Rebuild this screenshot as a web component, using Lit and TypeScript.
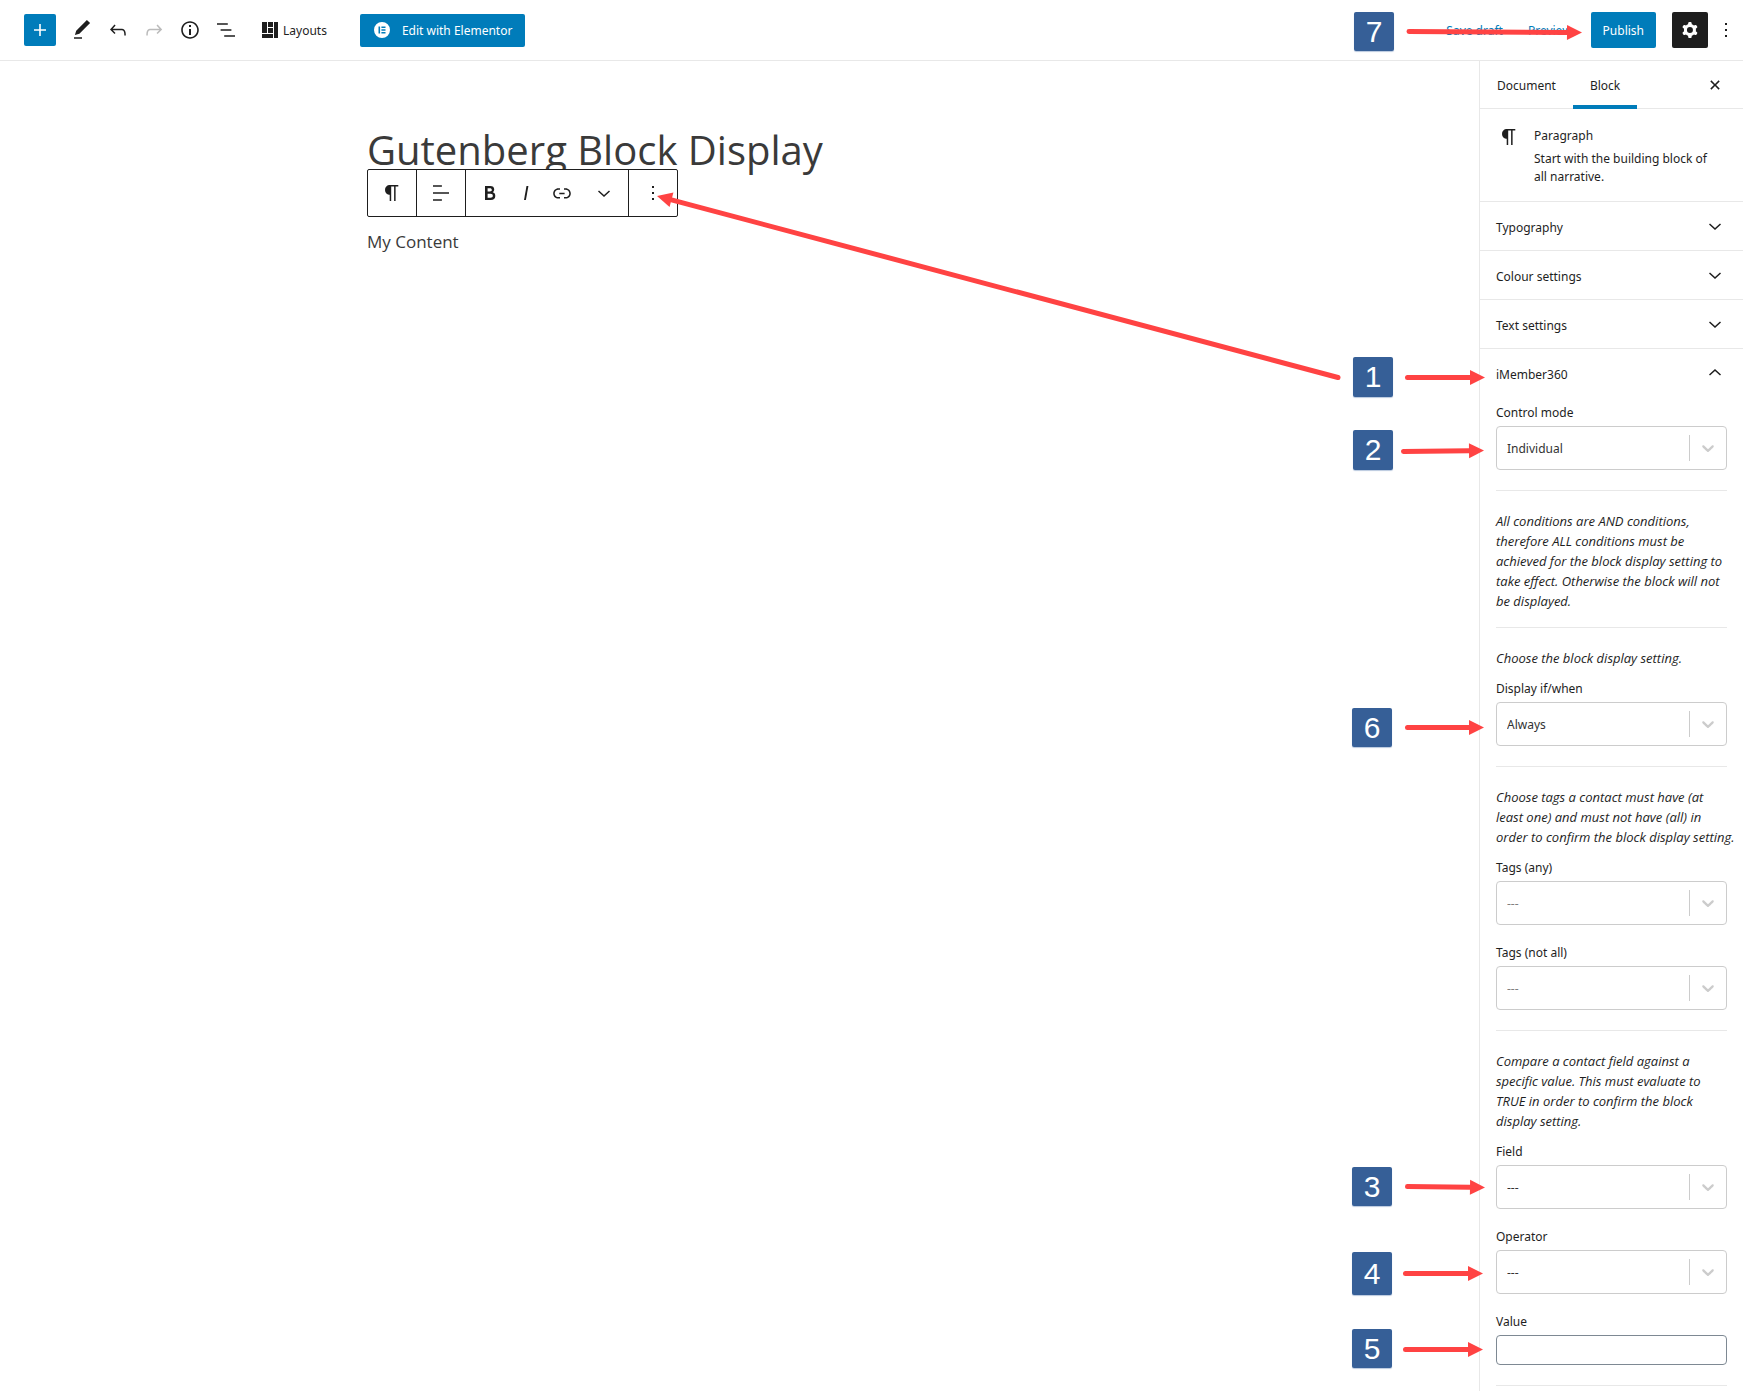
import { LitElement, html, css, svg, nothing } from "lit";
import { customElement, property, state } from "lit/decorators.js";
import { classMap } from "lit/directives/class-map.js";

const ICONS: Record<string, string> = {
  plus: "M18 11.2h-5.2V6h-1.6v5.2H6v1.6h5.2V18h1.6v-5.2H18z",
  edit: "M20.1 5.1L16.9 2 6.2 12.7l-1.3 4.4 4.5-1.3L20.1 5.1zM4 20.8h8v-1.5H4v1.5z",
  undo: "M18.3 11.7c-.6-.6-1.4-.9-2.3-.9H6.7l2.9-3.3-1.1-1-4.5 5L8.5 16l1-1-2.7-2.7H16c.5 0 .9.2 1.3.5 1 1 1 3.4 1 4.5v.3h1.5v-.2c0-1.5 0-4.3-1.5-5.7z",
  redo: "M15.6 6.5l-1.1 1 2.9 3.3H8c-.9 0-1.7.3-2.3.9-1.4 1.5-1.4 4.2-1.4 5.6v.2h1.5v-.3c0-1.1 0-3.5 1-4.5.3-.3.7-.5 1.3-.5h9.2L14.5 15l1.1 1.1 4.6-4.6-4.6-5z",
  info: "M12 3.2c-4.8 0-8.8 3.9-8.8 8.8 0 4.8 3.9 8.8 8.8 8.8 4.8 0 8.8-3.9 8.8-8.8 0-4.8-4-8.8-8.8-8.8zm0 16c-4 0-7.2-3.3-7.2-7.2C4.8 8 8 4.8 12 4.8s7.2 3.3 7.2 7.2c0 4-3.2 7.2-7.2 7.2zM11 17h2v-6h-2v6zm0-8h2V7h-2v2z",
  outline: "M13.8 5.2H3v1.5h10.8V5.2zm-3.6 12v1.5H21v-1.5H10.2zm7.2-6H6.6v1.5h10.8v-1.5z",
  layouts: "M4 4h5v11H4zM4 16h11v4H4zM10 4h5v5h-5zM10 10h5v5h-5zM16 4h4v16h-4z",
  cog: "M10.289 4.836A1 1 0 0111.275 4h1.306a1 1 0 01.987.836l.244 1.466c.787.26 1.503.679 2.108 1.218l1.393-.522a1 1 0 011.216.437l.653 1.13a1 1 0 01-.23 1.273l-1.148.944a6.025 6.025 0 010 2.435l1.149.946a1 1 0 01.23 1.272l-.653 1.13a1 1 0 01-1.216.437l-1.394-.522c-.605.54-1.32.958-2.108 1.218l-.244 1.466a1 1 0 01-.987.836h-1.306a1 1 0 01-.986-.836l-.244-1.466a5.995 5.995 0 01-2.108-1.218l-1.394.522a1 1 0 01-1.217-.436l-.653-1.131a1 1 0 01.23-1.272l1.149-.946a6.026 6.026 0 010-2.435l-1.148-.944a1 1 0 01-.23-1.272l.653-1.131a1 1 0 011.217-.437l1.393.522a5.994 5.994 0 012.108-1.218l.244-1.466zM14.929 12a3 3 0 11-6 0 3 3 0 016 0z",
  more: "M13 19h-2v-2h2v2zm0-6h-2v-2h2v2zm0-6h-2V5h2v2z",
  paragraph: "M18.3 4H9.9v-.1l-.9.2c-2.3.4-4 2.4-4 4.8s1.7 4.4 4 4.8l.7.1V20h1.5V5.5h2.9V20h1.5V5.5h2.7V4z",
  align: "M4 19.8h8.9v-1.5H4v1.5zm8.9-15.6H4v1.5h8.9V4.2zm-8.9 7v1.5h16v-1.5H4z",
  bold: "M14.7 11.3c1-.6 1.5-1.6 1.5-3 0-2.3-1.3-3.4-4-3.4H7v14h5.8c1.4 0 2.5-.3 3.3-1 .8-.7 1.2-1.7 1.2-2.9.1-1.9-.8-3.1-2.6-3.7zm-5.1-4h2.3c.6 0 1.1.1 1.4.4.3.3.5.7.5 1.2s-.2 1-.5 1.2c-.3.3-.8.4-1.4.4H9.6V7.3zm4.6 9c-.4.3-1 .4-1.7.4H9.6v-3.9h2.9c.7 0 1.3.2 1.7.5.4.3.6.8.6 1.5s-.2 1.2-.6 1.5z",
  italic: "M12.5 5L10 19h1.9l2.5-14z",
  link: "M15.6 7.2H14v1.5h1.6c2 0 3.7 1.7 3.7 3.7s-1.7 3.7-3.7 3.7H14v1.5h1.6c2.8 0 5.2-2.3 5.2-5.2 0-2.9-2.3-5.2-5.2-5.2zM4.7 12.4c0-2 1.7-3.7 3.7-3.7H10V7.2H8.4c-2.9 0-5.2 2.3-5.2 5.2 0 2.9 2.3 5.2 5.2 5.2H10v-1.5H8.4c-2 0-3.7-1.7-3.7-3.7zm4.6.9h5.3v-1.5H9.3v1.5z",
  down: "M17 9.4L12 14 7 9.4l-1 1.1 6 5.5 6-5.5z",
  up: "M12 8l-6 5.5 1 1.1 5-4.6 5 4.6 1-1.1z",
  close: "M8.4 7.3l3.6 3.6 3.6-3.6 1.1 1.1-3.6 3.6 3.6 3.6-1.1 1.1-3.6-3.6-3.6 3.6-1.1-1.1 3.6-3.6-3.6-3.6z",
  elementor: "M12 4a8 8 0 100 16 8 8 0 000-16zM8.5 8.5h1.6v7H8.5zM11.4 8.5h4.1v1.4h-4.1zM11.4 11.3h4.1v1.4h-4.1zM11.4 14.1h4.1v1.4h-4.1z",
};

const icon = (name: string) => html`
  <svg class="icon" viewBox="0 0 24 24" width="24" height="24" fill-rule="evenodd" aria-hidden="true">
    <path d=${ICONS[name]}></path>
  </svg>`;

const base = css`
  :host {
    box-sizing: border-box;
    font-family: "Noto Sans", "Open Sans", sans-serif;
    font-size: 12px;
    line-height: 18px;
    color: #1e1e1e;
  }
  *, *::before, *::after { box-sizing: border-box; }
  button {
    display: flex;
    align-items: center;
    justify-content: center;
    margin: 0;
    padding: 0;
    border: 0;
    background: none;
    color: inherit;
    font: inherit;
    cursor: pointer;
  }
  .caption { padding-top: 2px; }
  .icon { display: block; flex: none; fill: currentColor; }
`;

@customElement("editor-header")
export class EditorHeader extends LitElement {
  static styles = [base, css`
    :host {
      display: flex;
      align-items: center;
      justify-content: space-between;
      height: 61px;
      padding: 0 5px 0 24px;
      border-bottom: 1px solid #e8e8e8;
      background: #fff;
    }
    .group { display: flex; align-items: center; }
    .add { width: 32px; height: 32px; margin-right: 8px; border-radius: 2px; background: #007cba; color: #fff; }
    .tool { width: 36px; height: 36px; }
    .tool:disabled { color: #bbb; }
    .layouts { margin-left: 14px; gap: 1px; }
    .elementor { height: 33px; margin-left: 33px; padding: 0 13px 0 10px; gap: 8px; border-radius: 2px; background: #007cba; color: #fff; }
    .actions { gap: 16px; }
    .link { padding: 0 3px 0 6px; color: #007cba; }
    .publish { height: 36px; padding: 0 12px; border-radius: 2px; background: #007cba; color: #fff; }
    .settings { width: 36px; height: 36px; border-radius: 2px; background: #1e1e1e; color: #fff; }
    .more { width: 24px; height: 36px; margin-left: -10px; }
  `];

  render() {
    return html`
      <div class="group">
        <button class="add" aria-label="Add block">${icon("plus")}</button>
        <button class="tool" aria-label="Tools">${icon("edit")}</button>
        <button class="tool" aria-label="Undo">${icon("undo")}</button>
        <button class="tool" aria-label="Redo" disabled>${icon("redo")}</button>
        <button class="tool" aria-label="Content structure">${icon("info")}</button>
        <button class="tool" aria-label="Block navigation">${icon("outline")}</button>
        <button class="layouts">${icon("layouts")}<span class="caption">Layouts</span></button>
        <button class="elementor">${icon("elementor")}<span class="caption">Edit with Elementor</span></button>
      </div>
      <div class="group actions">
        <button class="link"><span class="caption">Save draft</span></button>
        <button class="link"><span class="caption">Preview</span></button>
        <button class="publish"><span class="caption">Publish</span></button>
        <button class="settings" aria-label="Settings">${icon("cog")}</button>
        <button class="more" aria-label="Options">${icon("more")}</button>
      </div>`;
  }
}

@customElement("editor-canvas")
export class EditorCanvas extends LitElement {
  static styles = [base, css`
    :host { display: block; padding: 61px 16px; font-family: "Open Sans", "Noto Sans", sans-serif; color: #3a3a3a; }
    .column { width: 100%; max-width: 745px; margin: 0 auto; }
    .title { margin: 0; font-size: 40px; line-height: 56px; font-weight: 400; }
    .toolbar {
      position: relative;
      display: flex;
      width: max-content;
      height: 48px;
      margin-top: -9px;
      border: 1px solid #1e1e1e;
      border-radius: 2px;
      background: #fff;
      color: #1e1e1e;
    }
    .set { display: flex; align-items: center; padding: 0 6px; }
    .set + .set { border-left: 1px solid #1e1e1e; }
    .set button { width: 36px; height: 46px; }
    .set.formats { padding-right: 0; }
    .set .wide { width: 48px; }
    .text { margin: 13px 0 0; font-size: 17px; line-height: 24px; }
  `];

  render() {
    return html`
      <div class="column">
        <h1 class="title">Gutenberg Block Display</h1>
        <div class="toolbar" role="toolbar" aria-label="Block tools">
          <div class="set"><button aria-label="Change block type">${icon("paragraph")}</button></div>
          <div class="set"><button aria-label="Align">${icon("align")}</button></div>
          <div class="set formats">
            <button aria-label="Bold">${icon("bold")}</button>
            <button aria-label="Italic">${icon("italic")}</button>
            <button aria-label="Link">${icon("link")}</button>
            <button class="wide" aria-label="More rich text controls">${icon("down")}</button>
          </div>
          <div class="set"><button aria-label="More options">${icon("more")}</button></div>
        </div>
        <p class="text">My Content</p>
      </div>`;
  }
}

@customElement("select-field")
export class SelectField extends LitElement {
  @property() label = "";
  @property() value = "";
  @property({ type: Boolean }) placeholder = false;

  static styles = [base, css`
    :host { display: block; }
    .label { display: block; margin-bottom: 3px; line-height: 20px; }
    .box {
      display: grid;
      grid-template-columns: 1fr 37px;
      align-items: center;
      height: 44px;
      border: 1px solid #ccc;
      border-radius: 4px;
      background: #fff;
    }
    .select {
      grid-area: 1 / 1 / 2 / 3;
      width: 100%;
      height: 42px;
      margin: 0;
      padding: 2px 46px 0 10px;
      border: 0;
      appearance: none;
      background: none;
      color: #333;
      font: inherit;
    }
    .muted { color: #808080; }
    .arrow {
      grid-area: 1 / 2;
      display: flex;
      align-items: center;
      justify-content: center;
      height: 26px;
      border-left: 1px solid #ccc;
      color: #ccc;
      pointer-events: none;
    }
  `];

  render() {
    return html`
      <label class="label" for="control">${this.label}</label>
      <div class="box">
        <select id="control" class=${classMap({ select: true, muted: this.placeholder })}>
          <option>${this.value}</option>
        </select>
        <span class="arrow">
          <svg class="icon" viewBox="0 0 20 20" width="20" height="20" aria-hidden="true">
            <path d="M4.516 7.548c0.436-0.446 1.043-0.481 1.576 0l3.908 3.747 3.908-3.747c0.533-0.481 1.141-0.446 1.574 0 0.436 0.445 0.408 1.197 0 1.615-0.406 0.418-4.695 4.502-4.695 4.502-0.217 0.223-0.502 0.335-0.787 0.335s-0.57-0.112-0.789-0.335c0 0-4.287-4.084-4.695-4.502s-0.436-1.17 0-1.615z"></path>
          </svg>
        </span>
      </div>`;
  }
}

@customElement("editor-sidebar")
export class EditorSidebar extends LitElement {
  @state() private open = true;

  static styles = [base, css`
    :host { display: block; border-left: 1px solid #e8e8e8; background: #fff; }
    .tabs { display: flex; height: 48px; border-bottom: 1px solid #e8e8e8; }
    .tab { height: 48px; padding: 0 17px; }
    .active { border-bottom: 4px solid #007cba; padding-top: 4px; }
    .close { width: 24px; margin: 0 16px 0 auto; }
    .card { display: flex; gap: 13px; padding: 16px 16px 15px 17px; }
    .name { margin: 0; padding-top: 2px; font-size: 12px; font-weight: 400; line-height: 18px; }
    .about { margin: 5px 0 0; }
    .panel { border-top: 1px solid #e8e8e8; }
    .heading { margin: 0; font-size: 12px; font-weight: 400; }
    .toggle { width: 100%; height: 48px; padding: 0 16px; justify-content: space-between; }
    .toggle .caption { padding-top: 4px; }
    .body { padding: 6px 16px 4px; }
    .rule { height: 1px; margin: 20px 0; border: 0; background: #e8e8e8; }
    .help { margin: 0 0 11px; font-family: "Open Sans", "Noto Sans", sans-serif; font-size: 13px; font-style: italic; line-height: 20px; white-space: nowrap; }
    .help.last { margin-bottom: 16px; }
    .last + .rule { margin-top: 16px; }
    .field + .field { margin-top: 18px; }
    .label { display: block; margin-bottom: 3px; line-height: 20px; }
    .input { display: block; width: 100%; height: 30px; padding: 0 8px; border: 1px solid #7e8993; border-radius: 4px; background: #fff; color: inherit; font: inherit; }
    .end { margin-bottom: 0; }
  `];

  private section(title: string, body: unknown = nothing, open = false, toggle?: () => void) {
    return html`
      <section class="panel">
        <h2 class="heading">
          <button class="toggle" aria-expanded=${open ? "true" : "false"} @click=${toggle}>
            <span class="caption">${title}</span>${icon(open ? "up" : "down")}
          </button>
        </h2>
        ${open ? body : nothing}
      </section>`;
  }

  render() {
    const body = html`
      <div class="body">
        <select-field class="field" label="Control mode" value="Individual"></select-field>
        <hr class="rule" />
        <p class="help last">All conditions are AND conditions,<br />therefore ALL conditions must be<br />achieved for the block display setting to<br />take effect. Otherwise the block will not<br />be displayed.</p>
        <hr class="rule" />
        <p class="help">Choose the block display setting.</p>
        <select-field class="field" label="Display if/when" value="Always"></select-field>
        <hr class="rule" />
        <p class="help">Choose tags a contact must have (at<br />least one) and must not have (all) in<br />order to confirm the block display setting.</p>
        <select-field class="field" label="Tags (any)" value="---" placeholder></select-field>
        <select-field class="field" label="Tags (not all)" value="---" placeholder></select-field>
        <hr class="rule" />
        <p class="help">Compare a contact field against a<br />specific value. This must evaluate to<br />TRUE in order to confirm the block<br />display setting.</p>
        <select-field class="field" label="Field" value="---"></select-field>
        <select-field class="field" label="Operator" value="---"></select-field>
        <div class="field">
          <label class="label" for="value">Value</label>
          <input class="input" id="value" type="text" />
        </div>
        <hr class="rule end" />
      </div>`;
    return html`
      <div class="tabs">
        <button class="tab"><span class="caption">Document</span></button>
        <button class="tab active"><span class="caption">Block</span></button>
        <button class="close" aria-label="Close settings">${icon("close")}</button>
      </div>
      <div class="card">
        ${icon("paragraph")}
        <div>
          <h2 class="name">Paragraph</h2>
          <p class="about">Start with the building block of<br />all narrative.</p>
        </div>
      </div>
      ${this.section("Typography")}
      ${this.section("Colour settings")}
      ${this.section("Text settings")}
      ${this.section("iMember360", body, this.open, () => (this.open = !this.open))}`;
  }
}

interface Step { n: number; x: number; y: number; h: number }
interface Arrow { from: [number, number]; to: [number, number] }

/* Coordinates are measured from the top right corner of the page, x growing leftwards as negatives. */
const STEPS: Step[] = [
  { n: 7, x: -389, y: 12, h: 39 },
  { n: 1, x: -390, y: 357, h: 40 },
  { n: 2, x: -390, y: 430, h: 40 },
  { n: 6, x: -391, y: 708, h: 39 },
  { n: 3, x: -391, y: 1167, h: 39 },
  { n: 4, x: -391, y: 1252, h: 43 },
  { n: 5, x: -391, y: 1329, h: 39 },
];

const ARROWS: Arrow[] = [
  { from: [-334, 31.5], to: [-161, 32.5] },
  { from: [-405, 377.5], to: [-1086, 196] },
  { from: [-335.5, 377.5], to: [-258, 377.5] },
  { from: [-339.5, 451.5], to: [-259, 450.5] },
  { from: [-335.5, 727.5], to: [-259, 727.5] },
  { from: [-335.5, 1186.5], to: [-258, 1187.5] },
  { from: [-337.5, 1273.5], to: [-260, 1273.5] },
  { from: [-337.5, 1349.5], to: [-260, 1349.5] },
];

@customElement("step-guide")
export class StepGuide extends LitElement {
  static styles = [base, css`
    :host { position: absolute; top: 0; right: 0; width: 0; height: 0; pointer-events: none; }
    .arrows { position: absolute; top: 0; left: 0; width: 1px; height: 1px; overflow: visible; }
    .shaft { stroke: #ff4343; stroke-width: 5; stroke-linecap: round; }
    .head { fill: #ff4343; }
    .step {
      position: absolute;
      display: flex;
      align-items: center;
      justify-content: center;
      width: 40px;
      border-radius: 2px;
      background: #365f97;
      box-shadow: 0 1px 1px #b9c8de;
      color: #fff;
      font-family: "Liberation Sans", sans-serif;
      font-size: 30px;
      line-height: 36px;
    }
  `];

  private arrow({ from: [x1, y1], to: [x2, y2] }: Arrow) {
    const len = Math.hypot(x2 - x1, y2 - y1);
    const ux = (x2 - x1) / len;
    const uy = (y2 - y1) / len;
    const bx = x2 - ux * 15;
    const by = y2 - uy * 15;
    const points = `${x2},${y2} ${bx - uy * 7.5},${by + ux * 7.5} ${bx + uy * 7.5},${by - ux * 7.5}`;
    return svg`
      <line class="shaft" x1=${x1} y1=${y1} x2=${bx} y2=${by}></line>
      <polygon class="head" points=${points}></polygon>`;
  }

  render() {
    return html`
      <svg class="arrows" aria-hidden="true">${ARROWS.map((a) => this.arrow(a))}</svg>
      ${STEPS.map((s) => html`
        <span class="step" style="left:${s.x}px;top:${s.y}px;height:${s.h}px">${s.n}</span>`)}`;
  }
}

@customElement("app-root")
export class AppRoot extends LitElement {
  static styles = css`
    :host { position: relative; display: block; min-height: 100vh; background: #fff; overflow-x: clip; }
    .main { display: grid; grid-template-columns: minmax(0, 1fr) 264px; min-height: calc(100vh - 61px); }
  `;

  render() {
    return html`
      <editor-header></editor-header>
      <div class="main">
        <editor-canvas></editor-canvas>
        <editor-sidebar></editor-sidebar>
      </div>
      <step-guide></step-guide>`;
  }
}
